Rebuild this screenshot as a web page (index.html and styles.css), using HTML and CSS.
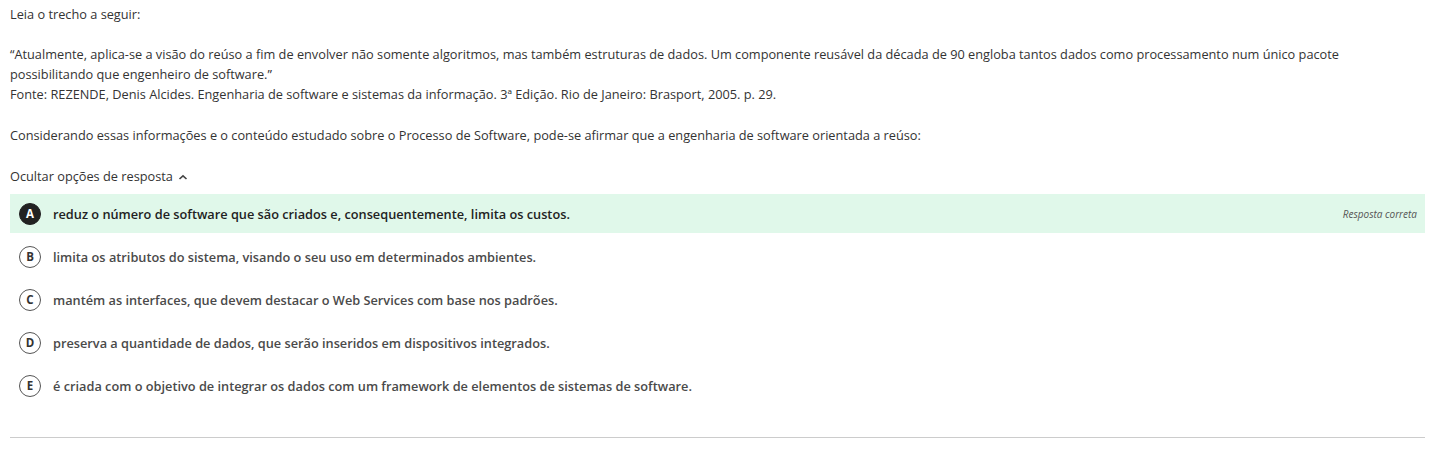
FILE: index.html
```html
<!DOCTYPE html>
<html lang="pt">
<head>
<meta charset="utf-8">
<link rel="stylesheet" href="styles.css">
</head>
<body>
<div class="page">
  <p class="intro">Leia o trecho a seguir:</p>
  <p class="quote">“Atualmente, aplica-se a visão do reúso a fim de envolver não somente algoritmos, mas também estruturas de dados. Um componente reusável da década de 90 engloba tantos dados como processamento num único pacote possibilitando que engenheiro de software.”<br>Fonte: REZENDE, Denis Alcides. Engenharia de software e sistemas da informação. 3ª Edição. Rio de Janeiro: Brasport, 2005. p. 29.</p>
  <p class="question">Considerando essas informações e o conteúdo estudado sobre o Processo de Software, pode-se afirmar que a engenharia de software orientada a reúso:</p>
  <div class="toggle">Ocultar opções de resposta <svg class="chev" width="10" height="8" viewBox="0 0 10 8"><path d="M1.5 6 L5 2.8 L8.5 6" fill="none" stroke="#444" stroke-width="1.6"/></svg></div>
  <ul class="options">
    <li class="option correct"><span class="letter">A</span><span class="text">reduz o número de software que são criados e, consequentemente, limita os custos.</span><span class="tag">Resposta correta</span></li>
    <li class="option"><span class="letter">B</span><span class="text">limita os atributos do sistema, visando o seu uso em determinados ambientes.</span></li>
    <li class="option"><span class="letter">C</span><span class="text">mantém as interfaces, que devem destacar o Web Services com base nos padrões.</span></li>
    <li class="option"><span class="letter">D</span><span class="text">preserva a quantidade de dados, que serão inseridos em dispositivos integrados.</span></li>
    <li class="option"><span class="letter">E</span><span class="text">é criada com o objetivo de integrar os dados com um framework de elementos de sistemas de software.</span></li>
  </ul>
  <hr class="divider">
</div>
</body>
</html>
```
FILE: styles.css
```css
html, body { margin: 0; padding: 0; background: #fff; }
body { font-family: "Open Sans", "Liberation Sans", sans-serif; font-size: 12.75px; color: #333; }
.page { padding: 4px 12px 0 10px; }
p { margin: 0; line-height: 20px; }
.intro { margin-bottom: 20px; }
.quote { margin-bottom: 21px; padding-right: 40px; }
.question { margin-bottom: 21px; }
.toggle { line-height: 20px; display: flex; align-items: center; gap: 5px; margin-bottom: 8px; }
.chev { margin-top: 2px; }
.options { list-style: none; margin: 0; padding: 0; }
.option { display: flex; align-items: center; height: 39px; margin-bottom: 4px; padding: 0 8px 0 9px; font-weight: 600; color: #4a4a4a; }
.option.correct { background: #e0f8ea; color: #222; }
.letter { width: 22px; height: 22px; border: 1px solid #555; border-radius: 50%; display: flex; align-items: center; justify-content: center; font-size: 11.5px; font-weight: 700; color: #333; margin-right: 12px; flex-shrink: 0; box-sizing: border-box; }
.correct .letter { background: #222; color: #fff; border-color: #222; }
.text { flex: 1; }
.tag { font-style: italic; font-weight: 400; font-size: 10px; color: #555; }
.divider { border: 0; border-top: 1px solid #ccc; margin: 32px 0 0; }
```
